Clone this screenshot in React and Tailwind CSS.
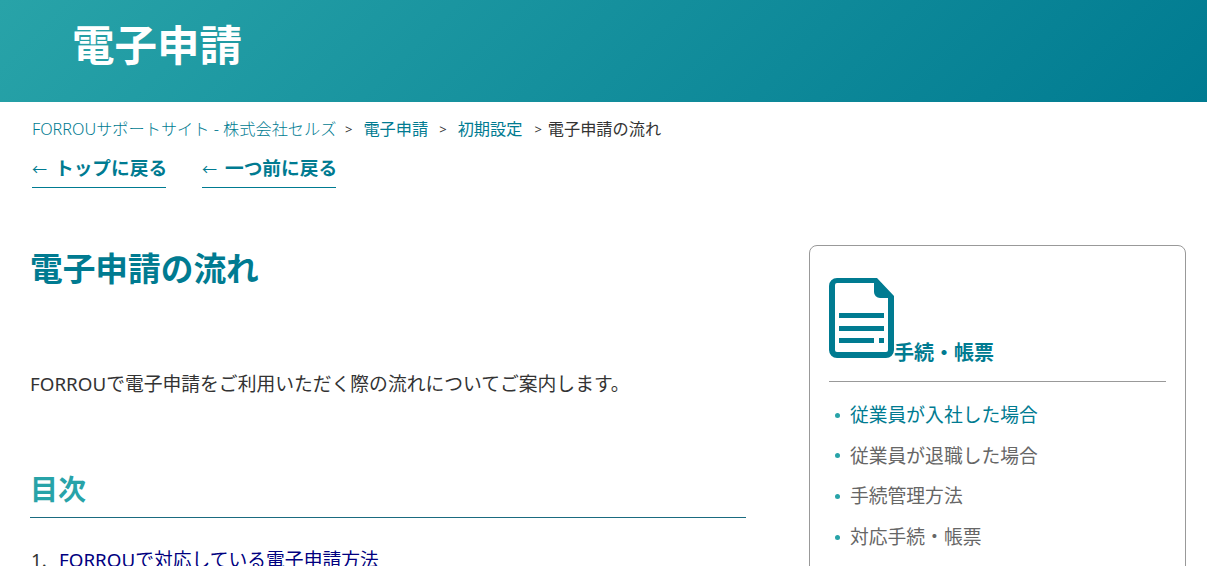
function Doc() {
  return (
    <svg width="65" height="80" viewBox="0 0 65 80" className="block shrink-0">
      <path fillRule="evenodd" fill="#007b91" d="M8 0H48L65 18V72a8 8 0 0 1-8 8H8a8 8 0 0 1-8-8V8a8 8 0 0 1 8-8ZM8 5a2 2 0 0 0-2 2V72a2 2 0 0 0 2 2H57a2 2 0 0 0 2-2V20H51a6 6 0 0 1-6-6V5Z" />
      <path fill="#007b91" d="M10 35H55V40H10ZM10 48H55V53H10ZM10 60H45V65H10ZM50 60H55V65H50Z" />
    </svg>
  );
}
function Item({ children, active }) {
  return (
    <li className="flex items-center h-[40.6px]">
      <span className="w-[5px] h-[5px] rounded-full bg-[#28a3a8] ml-[6px] mr-[10px] shrink-0" />
      <span className={active ? "text-[#007b91]" : "text-[#666]"}>{children}</span>
    </li>
  );
}
function Back({ children }) {
  return (
    <a className="border-b border-[#007b91] pb-[3px] w-[134px] whitespace-nowrap">
      <span className="inline-block w-[23px] font-normal text-[15px]">←</span>{children}
    </a>
  );
}
export default function App() {
  return (
    <div className="h-[566px] overflow-hidden bg-white text-[#333] font-['Noto_Sans','Noto_Sans_CJK_JP',sans-serif]">
      <header className="h-[102px] bg-[linear-gradient(135deg,#28a3a8,#007b91)] pl-[72px] pt-[15px]">
        <h1 className="text-[42.5px] leading-[60px] font-bold text-white">電子申請</h1>
      </header>
      <div className="pl-[32px] pt-[16px] text-[16.2px] leading-[22px] flex items-center whitespace-nowrap text-[#007b91]">
        <span className="font-light w-[303px]">FORROUサポートサイト - 株式会社セルズ</span>
        <span className="text-[#333] text-[13px] ml-[10px] mr-[11px]">&gt;</span>
        <span>電子申請</span>
        <span className="text-[#333] text-[13px] ml-[11px] mr-[11px]">&gt;</span>
        <span>初期設定</span>
        <span className="text-[#333] text-[13px] ml-[12px] mr-[6px]">&gt;</span>
        <span className="text-[#333]">電子申請の流れ</span>
      </div>
      <div className="pl-[32px] pt-[13px] flex gap-[36px] text-[18.7px] leading-[30px] font-bold text-[#007b91]">
        <Back>トップに戻る</Back>
        <Back>一つ前に戻る</Back>
      </div>
      <div className="flex pt-[57px]">
        <main className="w-[716px] ml-[30px] shrink-0">
          <h2 className="text-[32.7px] leading-[48px] font-bold text-[#007b91]">電子申請の流れ</h2>
          <p className="mt-[78px] text-[18.8px] leading-[26px]">FORROUで電子申請をご利用いただく際の流れについてご案内します。</p>
          <h3 className="mt-[72px] text-[28px] leading-[40px] font-bold text-[#28a3a8] pb-[8px] border-b border-[#1a6b80]">目次</h3>
          <ol className="mt-[29px] pl-[1px] text-[18.8px] leading-[26px] text-[#000080]">
            <li className="flex"><span className="w-[28px] text-[#333]">1.</span><span>FORROUで対応している電子申請方法</span></li>
          </ol>
        </main>
        <aside className="ml-[63px] w-[377px] h-[400px] border border-[#999] rounded-[8px] px-[19px] pt-[32px]">
          <div className="flex items-end border-b border-[#999] pb-[23px] text-[20px] leading-[24px] font-bold text-[#007b91]">
            <Doc />
            <span className="-mb-[7px]">手続・帳票</span>
          </div>
          <ul className="mt-[13px] text-[18.8px]">
            <Item active>従業員が入社した場合</Item>
            <Item>従業員が退職した場合</Item>
            <Item>手続管理方法</Item>
            <Item>対応手続・帳票</Item>
          </ul>
        </aside>
      </div>
    </div>
  );
}
